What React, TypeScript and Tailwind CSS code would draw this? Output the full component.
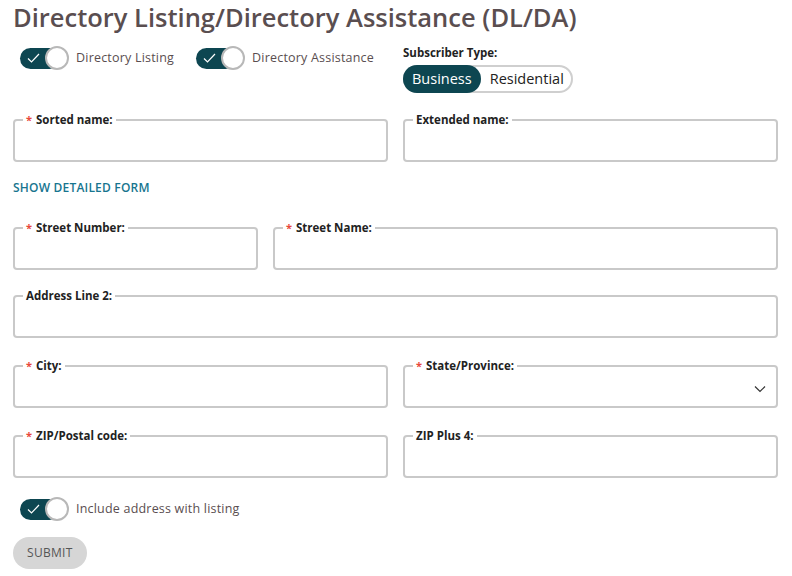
import { useState } from 'react'

const FONT = { fontFamily: '"Open Sans", "Liberation Sans", sans-serif' }

function Toggle({ on, label, onChange }: { on: boolean; label: string; onChange: () => void }) {
  return (
    <button onClick={onChange} className="flex items-center gap-[7px]">
      <span className="relative flex items-center w-[49px] h-[24px]">
        <span className={`absolute left-0 h-[21px] w-[40px] rounded-full ${on ? 'bg-[#0d4651]' : 'bg-[#cfcfcf]'}`} />
        {on && (
          <svg className="absolute left-[7px] top-[7px]" width="13" height="10" viewBox="0 0 13 10" fill="none">
            <path d="M1 5.5 L4.5 9 L12 1" stroke="#fff" strokeWidth="1.2" />
          </svg>
        )}
        <span className={`absolute ${on ? 'left-[25px]' : 'left-0'} top-0 w-[24px] h-[24px] rounded-full bg-white border-2 border-[#b8b8b8]`} />
      </span>
      <span className="text-[12.5px] text-[#5a4e50] tracking-[0.2px]">{label}</span>
    </button>
  )
}

function Field({ label, required, select }: { label: string; required?: boolean; select?: boolean }) {
  return (
    <fieldset className="border-2 border-[#c9c9c9] rounded-[4px] px-[8px] h-[49px] min-w-0">
      <legend className="px-[3px] text-[11.5px] font-bold text-[#222] leading-[14px]">
        {required && <span className="text-[#e8473b] mr-[4px] text-[11px]">*</span>}
        {label}
      </legend>
      <div className="flex items-center h-[30px]">
        <input className="flex-1 outline-none bg-transparent text-sm" />
        {select && (
          <svg width="12" height="8" viewBox="0 0 12 8" fill="none" className="mr-[2px] mt-[2px]">
            <path d="M1 1.5 L6 6.5 L11 1.5" stroke="#333" strokeWidth="1.2" />
          </svg>
        )}
      </div>
    </fieldset>
  )
}

export default function App() {
  const [listing, setListing] = useState(true)
  const [assist, setAssist] = useState(true)
  const [incl, setIncl] = useState(true)
  const [type, setType] = useState<'business' | 'residential'>('business')

  return (
    <div style={FONT} className="bg-white w-[792px] h-[576px] overflow-hidden pl-[13px] pr-[14px] pt-[1px]">
      <h1 className="text-[25.5px] font-semibold text-[#5a4e50] leading-[32px]">
        Directory Listing/Directory Assistance (DL/DA)
      </h1>

      {/* toggles + subscriber type */}
      <div className="grid grid-cols-2 gap-[15px] mt-[13px]">
        <div className="flex items-start gap-[22px] pl-[7px]">
          <Toggle on={listing} label="Directory Listing" onChange={() => setListing(p => !p)} />
          <Toggle on={assist} label="Directory Assistance" onChange={() => setAssist(p => !p)} />
        </div>
        <div>
          <div className="text-[11.5px] font-bold text-[#222] leading-[14px]">Subscriber Type:</div>
          <div className="inline-flex mt-[5px] h-[28px] rounded-full border-2 border-[#cfcfcf]">
            <button
              onClick={() => setType('business')}
              className={`px-[9px] -my-[2px] -ml-[2px] rounded-full text-[14.5px] ${type === 'business' ? 'bg-[#0d4651] text-white' : 'text-[#222]'}`}
            >
              Business
            </button>
            <button
              onClick={() => setType('residential')}
              className={`px-[9px] -my-[2px] -mr-[2px] rounded-full text-[14.5px] ${type === 'residential' ? 'bg-[#0d4651] text-white' : 'text-[#222]'}`}
            >
              Residential
            </button>
          </div>
        </div>
      </div>

      <div className="grid grid-cols-2 gap-[15px] mt-[20px]">
        <Field label="Sorted name:" required />
        <Field label="Extended name:" />
      </div>

      <button className="mt-[17px] text-[12px] font-semibold text-[#17758f] tracking-[0.2px]">SHOW DETAILED FORM</button>

      <div className="grid grid-cols-[245px_1fr] gap-[15px] mt-[23px]">
        <Field label="Street Number:" required />
        <Field label="Street Name:" required />
      </div>

      <div className="mt-[19px]">
        <Field label="Address Line 2:" />
      </div>

      <div className="grid grid-cols-2 gap-[15px] mt-[21px]">
        <Field label="City:" required />
        <Field label="State/Province:" required select />
      </div>

      <div className="grid grid-cols-2 gap-[15px] mt-[21px]">
        <Field label="ZIP/Postal code:" required />
        <Field label="ZIP Plus 4:" />
      </div>

      <div className="pl-[7px] mt-[19px]">
        <Toggle on={incl} label="Include address with listing" onChange={() => setIncl(p => !p)} />
      </div>

      <button className="mt-[16px] h-[32px] px-[14px] rounded-full bg-[#d6d6d6] text-[12px] text-[#555] tracking-[0.3px]">
        SUBMIT
      </button>
    </div>
  )
}
